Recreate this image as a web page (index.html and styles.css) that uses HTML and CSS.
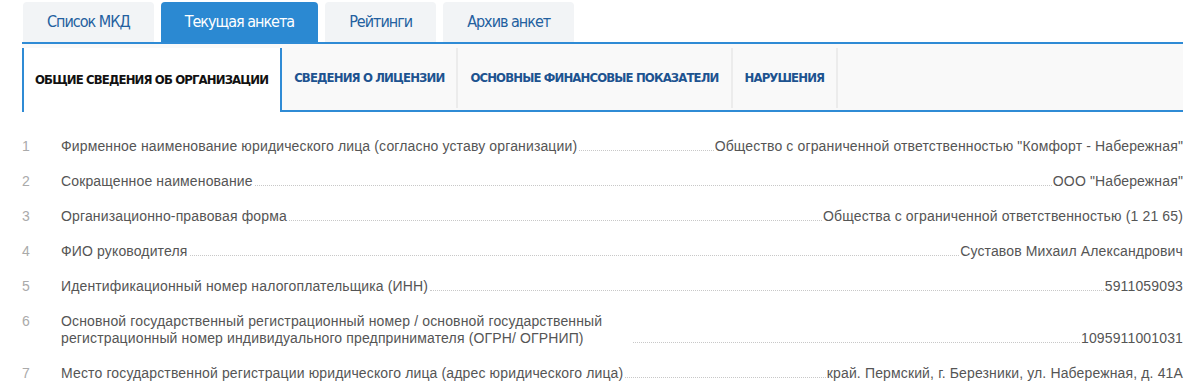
FILE: index.html
```html
<!DOCTYPE html>
<html lang="ru">
<head>
    <meta charset="UTF-8">
    <title>Текущая анкета</title>
    <link rel="stylesheet" href="styles.css">
</head>
<body>
    <div id="page">
        <div class="tabs">
            <div class="tab">Список МКД</div>
            <div class="tab active">Текущая анкета</div>
            <div class="tab">Рейтинги</div>
            <div class="tab">Архив анкет</div>
        </div>
        <div class="subtabs">
            <div class="subtab active">Общие сведения об организации</div>
            <div class="subtab">Сведения о лицензии</div>
            <div class="subtab">Основные финансовые показатели</div>
            <div class="subtab">Нарушения</div>
        </div>
        <div class="rows">
            <div class="row">
                <div class="num">1</div>
                <div class="line">
                    <div class="label">Фирменное наименование юридического лица (согласно уставу организации)</div>
                    <div class="dots"></div>
                    <div class="value">Общество с ограниченной ответственностью "Комфорт - Набережная"</div>
                </div>
            </div>
            <div class="row">
                <div class="num">2</div>
                <div class="line">
                    <div class="label">Сокращенное наименование</div>
                    <div class="dots"></div>
                    <div class="value">ООО "Набережная"</div>
                </div>
            </div>
            <div class="row">
                <div class="num">3</div>
                <div class="line">
                    <div class="label">Организационно-правовая форма</div>
                    <div class="dots"></div>
                    <div class="value">Общества с ограниченной ответственностью (1 21 65)</div>
                </div>
            </div>
            <div class="row">
                <div class="num">4</div>
                <div class="line">
                    <div class="label">ФИО руководителя</div>
                    <div class="dots"></div>
                    <div class="value">Суставов Михаил Александрович</div>
                </div>
            </div>
            <div class="row">
                <div class="num">5</div>
                <div class="line">
                    <div class="label">Идентификационный номер налогоплательщика (ИНН)</div>
                    <div class="dots"></div>
                    <div class="value">5911059093</div>
                </div>
            </div>
            <div class="row">
                <div class="num">6</div>
                <div class="line">
                    <div class="label">Основной государственный регистрационный номер / основной государственный регистрационный номер индивидуального предпринимателя (ОГРН/ ОГРНИП)</div>
                    <div class="dots"></div>
                    <div class="value">1095911001031</div>
                </div>
            </div>
            <div class="row">
                <div class="num">7</div>
                <div class="line">
                    <div class="label">Место государственной регистрации юридического лица (адрес юридического лица)</div>
                    <div class="dots"></div>
                    <div class="value">край. Пермский, г. Березники, ул. Набережная, д. 41А</div>
                </div>
            </div>
        </div>
    </div>
</body>
</html>
```

FILE: styles.css
```css
body {
    margin: 0;
    font-family: "Liberation Sans", Arial, sans-serif;
    background-color: #fff;
}

#page {
    margin-left: 22px;
    width: 1161px;
}

.tabs {
    display: flex;
    gap: 7px;
    padding: 2px 0 0 1px;
    border-bottom: 2px solid #2f8bd5;
}

.tab {
    height: 40px;
    line-height: 40px;
    padding: 0 24px;
    background-color: #f2f4f6;
    border-radius: 4px 4px 0 0;
    font-family: "DejaVu Sans Condensed", "DejaVu Sans", sans-serif;
    font-size: 16px;
    letter-spacing: -1px;
    color: #23609f;
}

.tab.active {
    background-color: #2b89d2;
    color: #fff;
}

.subtabs {
    display: flex;
    height: 62px;
    padding-top: 4px;
    background-color: #f9f9f9;
    border-bottom: 2px solid #2f8bd5;
}

.subtab {
    padding: 0 12px;
    line-height: 60px;
    border-right: 2px solid #ececec;
    margin-bottom: 2px;
    font-family: "DejaVu Sans Condensed", "DejaVu Sans", sans-serif;
    font-weight: bold;
    font-size: 13px;
    letter-spacing: -0.86px;
    text-transform: uppercase;
    color: #1d5390;
}

.subtab.active {
    background-color: #fff;
    color: #111;
    border-left: 2px solid #2f8bd5;
    border-right: 2px solid #2f8bd5;
    margin-bottom: -2px;
    line-height: 64px;
    padding-left: 11px;
}

.rows {
    padding-top: 26px;
    font-size: 14px;
    line-height: 17px;
    letter-spacing: 0.14px;
    color: #555;
}

.row {
    display: flex;
    margin-bottom: 18px;
}

.num {
    width: 39px;
    flex-shrink: 0;
    color: #aaa;
}

.line {
    flex: 1;
    display: flex;
    align-items: flex-end;
}

.label {
    max-width: 570px;
}

.dots {
    flex: 1;
    min-width: 10px;
    margin: 0 1px 4px 2px;
    border-bottom: 1px dotted #c8c8c8;
}

.value {
    white-space: nowrap;
    text-align: right;
}
```
